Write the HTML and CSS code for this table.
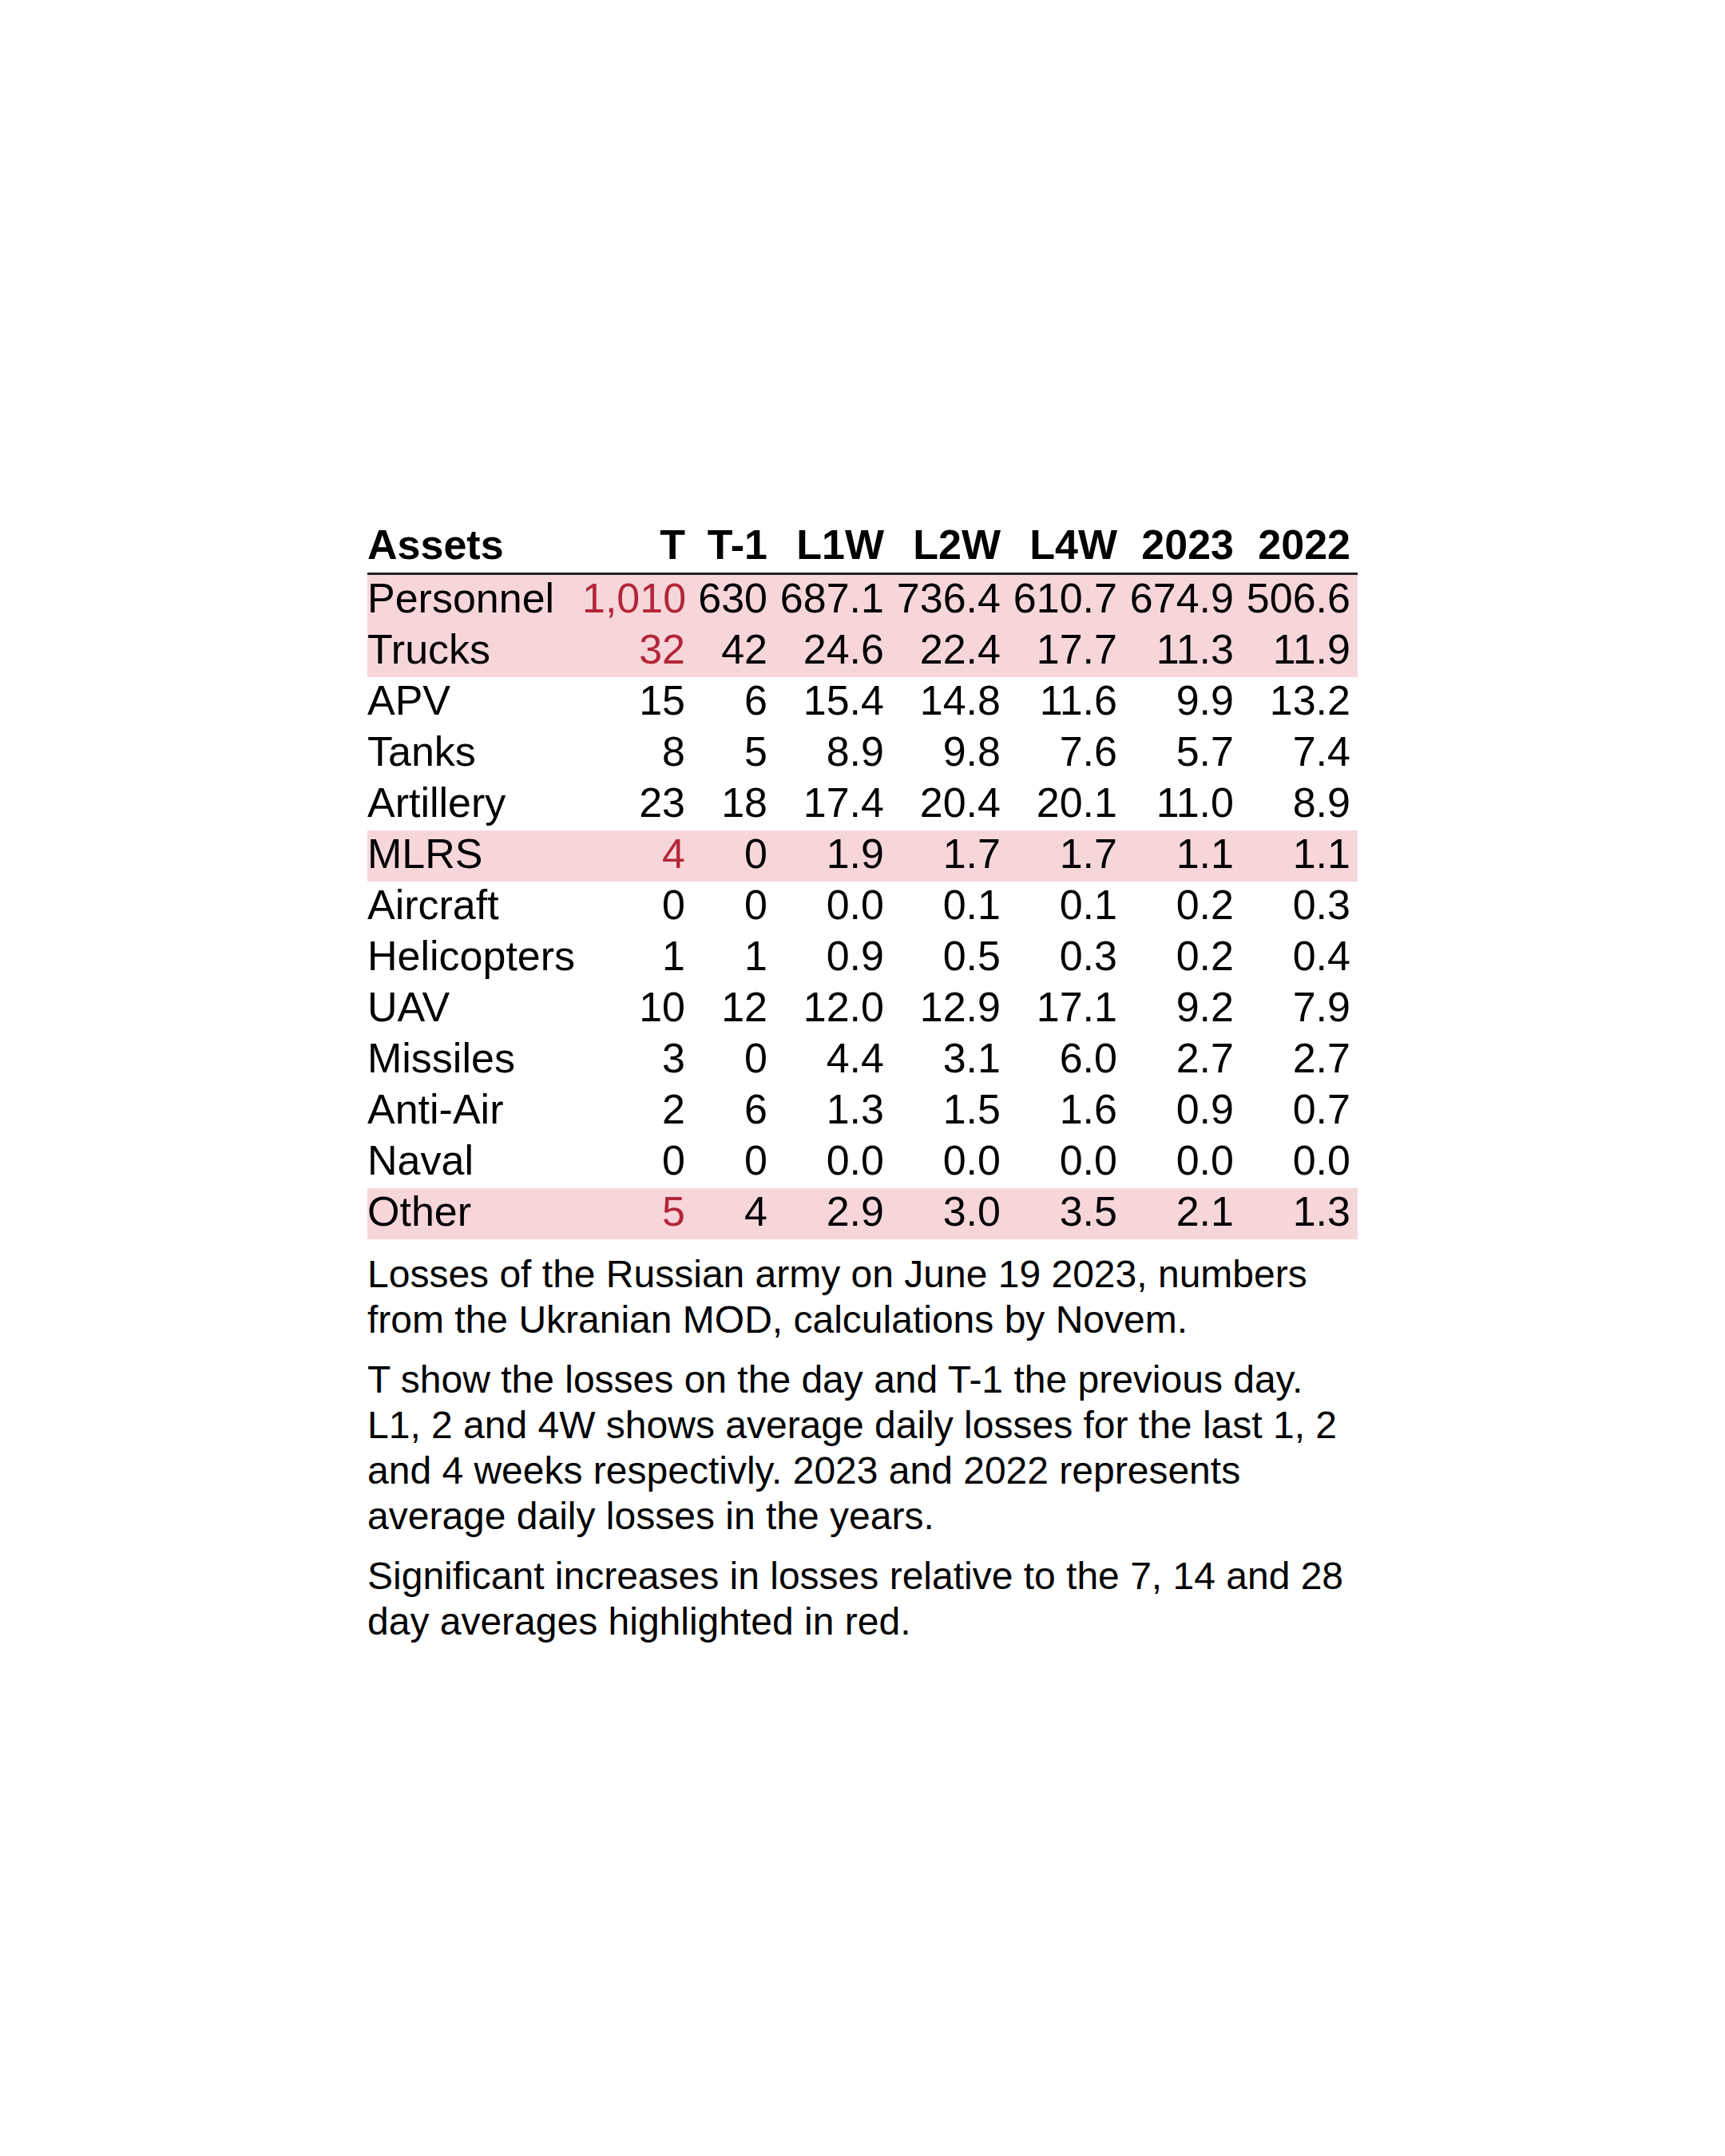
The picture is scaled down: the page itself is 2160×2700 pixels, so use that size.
FILE: index.html
```html
<!DOCTYPE html>
<html lang="en">
<head>
<meta charset="utf-8">
<title>Losses of the Russian army</title>
<link rel="stylesheet" href="styles.css">
</head>
<body>
<main class="page">
  <table class="losses">
    <colgroup>
      <col class="c-name">
      <col class="c-t">
      <col class="c-t1">
      <col class="c-num">
      <col class="c-num">
      <col class="c-num">
      <col class="c-num">
      <col class="c-num">
    </colgroup>
    <thead>
      <tr>
        <th class="name">Assets</th>
        <th>T</th>
        <th>T-1</th>
        <th>L1W</th>
        <th>L2W</th>
        <th>L4W</th>
        <th>2023</th>
        <th>2022</th>
      </tr>
    </thead>
    <tbody>
      <tr class="hl"><td class="name">Personnel</td><td class="up">1,010</td><td>630</td><td>687.1</td><td>736.4</td><td>610.7</td><td>674.9</td><td>506.6</td></tr>
      <tr class="hl"><td class="name">Trucks</td><td class="up">32</td><td>42</td><td>24.6</td><td>22.4</td><td>17.7</td><td>11.3</td><td>11.9</td></tr>
      <tr><td class="name">APV</td><td>15</td><td>6</td><td>15.4</td><td>14.8</td><td>11.6</td><td>9.9</td><td>13.2</td></tr>
      <tr><td class="name">Tanks</td><td>8</td><td>5</td><td>8.9</td><td>9.8</td><td>7.6</td><td>5.7</td><td>7.4</td></tr>
      <tr><td class="name">Artillery</td><td>23</td><td>18</td><td>17.4</td><td>20.4</td><td>20.1</td><td>11.0</td><td>8.9</td></tr>
      <tr class="hl"><td class="name">MLRS</td><td class="up">4</td><td>0</td><td>1.9</td><td>1.7</td><td>1.7</td><td>1.1</td><td>1.1</td></tr>
      <tr><td class="name">Aircraft</td><td>0</td><td>0</td><td>0.0</td><td>0.1</td><td>0.1</td><td>0.2</td><td>0.3</td></tr>
      <tr><td class="name">Helicopters</td><td>1</td><td>1</td><td>0.9</td><td>0.5</td><td>0.3</td><td>0.2</td><td>0.4</td></tr>
      <tr><td class="name">UAV</td><td>10</td><td>12</td><td>12.0</td><td>12.9</td><td>17.1</td><td>9.2</td><td>7.9</td></tr>
      <tr><td class="name">Missiles</td><td>3</td><td>0</td><td>4.4</td><td>3.1</td><td>6.0</td><td>2.7</td><td>2.7</td></tr>
      <tr><td class="name">Anti-Air</td><td>2</td><td>6</td><td>1.3</td><td>1.5</td><td>1.6</td><td>0.9</td><td>0.7</td></tr>
      <tr><td class="name">Naval</td><td>0</td><td>0</td><td>0.0</td><td>0.0</td><td>0.0</td><td>0.0</td><td>0.0</td></tr>
      <tr class="hl"><td class="name">Other</td><td class="up">5</td><td>4</td><td>2.9</td><td>3.0</td><td>3.5</td><td>2.1</td><td>1.3</td></tr>
    </tbody>
  </table>
  <div class="notes">
    <p>Losses of the Russian army on June 19 2023, numbers from the Ukranian MOD, calculations by Novem.</p>
    <p>T show the losses on the day and T-1 the previous day. L1, 2 and 4W shows average daily losses for the last 1, 2 and 4 weeks respectivly. 2023 and 2022 represents average daily losses in the years.</p>
    <p>Significant increases in losses relative to the 7, 14 and 28 day averages highlighted in red.</p>
  </div>
</main>
</body>
</html>
```

FILE: styles.css
```css
html, body {
  margin: 0;
  padding: 0;
  background: #ffffff;
}

body {
  font-family: "Liberation Sans", Arial, sans-serif;
  color: #000000;
}

.page {
  width: 1240px;
  margin: 0 auto;
  padding-top: 653px;
  display: flex;
  flex-direction: column;
}

.losses {
  width: 1240px;
  table-layout: fixed;
  border-collapse: collapse;
  border-spacing: 0;
  font-size: 52px;
}

.c-name { width: 269px; }
.c-t { width: 138px; }
.c-t1 { width: 103px; }
.c-num { width: 146px; }

.losses th,
.losses td {
  padding: 0 9px 6px 0;
  line-height: 58px;
  text-align: right;
  white-space: nowrap;
  font-weight: normal;
}

.losses th {
  font-weight: bold;
  border-bottom: 3px solid #222222;
}

.losses .name {
  text-align: left;
  padding-left: 0;
}

.losses tr.hl td {
  background: #f7d6da;
}

.losses td.up {
  color: #b3263a;
}

.notes {
  margin-top: 15px;
  font-size: 48px;
  line-height: 57px;
}

.notes p {
  margin: 0 0 18px 0;
}
```
